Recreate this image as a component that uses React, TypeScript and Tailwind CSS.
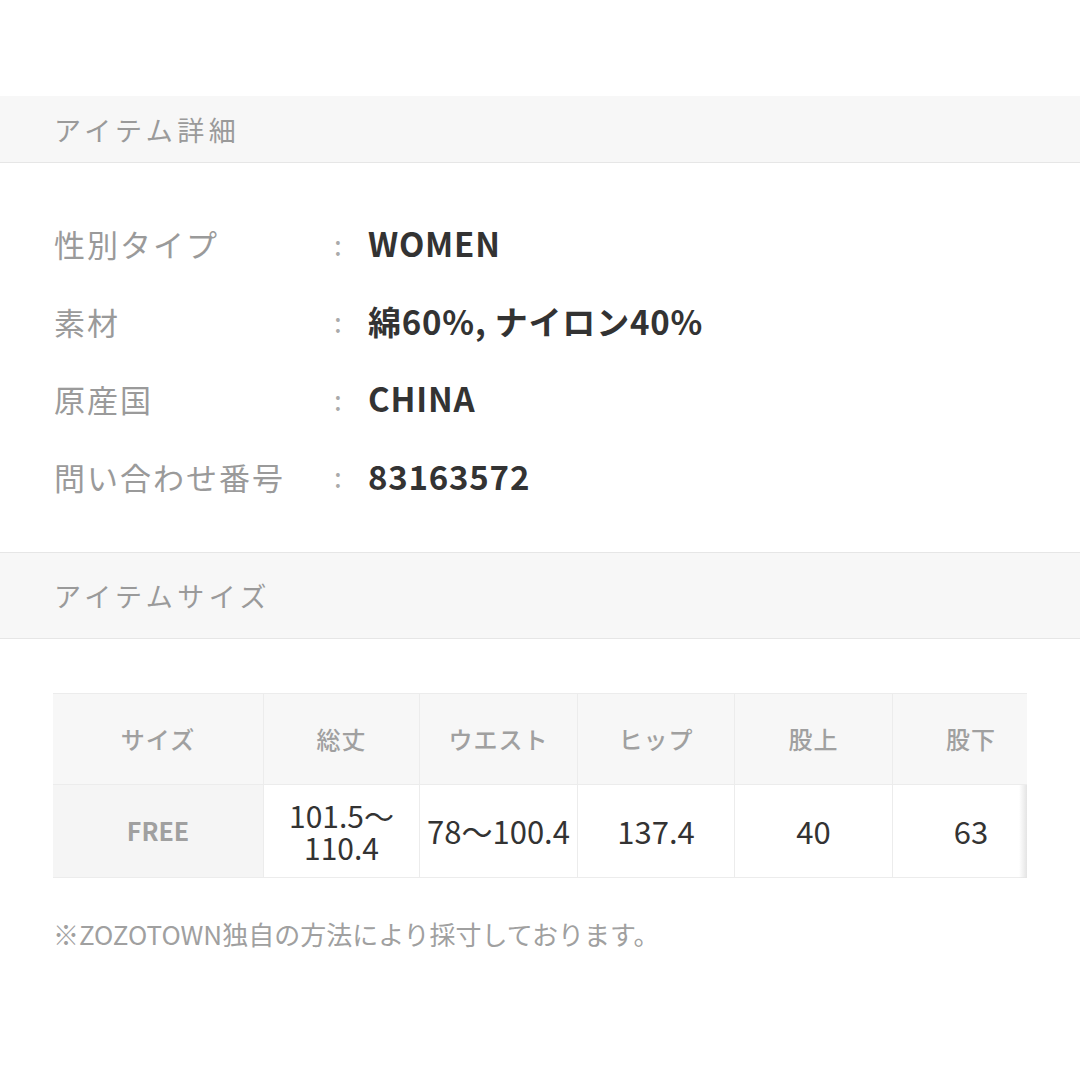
import React from "react";

const font = { fontFamily: '"Noto Sans CJK JP", "Noto Sans", sans-serif' };

const rows: [string, string][] = [
  ["性別タイプ", "WOMEN"],
  ["素材", "綿60%, ナイロン40%"],
  ["原産国", "CHINA"],
  ["問い合わせ番号", "83163572"],
];

const heads = ["総丈", "ウエスト", "ヒップ", "股上", "股下"];
const widths = ["w-[156px]", "w-[158px]", "w-[157px]", "w-[158px]", "w-[157px]"];

export default function App() {
  return (
    <div className="w-[1080px] h-[1080px] bg-white overflow-hidden" style={font}>
      <div className="h-[96px]" />
      <div className="h-[67px] bg-[#f7f7f7] border-b border-[#e6e6e6] flex items-center pl-[54px]">
        <span className="text-[27px] tracking-[4.5px] text-[#9a9a9a] leading-none">アイテム詳細</span>
      </div>
      <div className="pt-[42px] pl-[54px] flex flex-col">
        {rows.map(([k, v]) => (
          <div key={k} className="h-[77.5px] flex items-center">
            <span className="w-[280px] text-[31px] tracking-[2px] text-[#9a9a9a] leading-none">{k}</span>
            <span className="w-[34px] text-[28px] text-[#aaaaaa] leading-none">:</span>
            <span className="text-[33px] tracking-[0.8px] font-bold text-[#333333] leading-none">{v}</span>
          </div>
        ))}
      </div>
      <div className="h-[37px]" />
      <div className="h-[87px] bg-[#f7f7f7] border-y border-[#e6e6e6] flex items-center pl-[54px]">
        <span className="text-[27px] tracking-[4.5px] text-[#9a9a9a] leading-none">アイテムサイズ</span>
      </div>
      <div className="h-[54px]" />
      <div className="ml-[53px] w-[974px] overflow-hidden relative">
        <div className="flex flex-col w-[1000px]">
          <div className="flex h-[92px] bg-[#f7f7f7] border-y border-[#ececec]">
            <div className="w-[211px] flex items-center justify-center border-r border-[#ececec] text-[24px] tracking-[1px] font-medium text-[#a0a0a0]">サイズ</div>
            {heads.map((h, i) => (
              <div key={h} className={`${widths[i]} flex items-center justify-center border-r border-[#ececec] text-[24px] tracking-[1px] font-medium text-[#a0a0a0]`}>{h}</div>
            ))}
          </div>
          <div className="flex h-[93px] border-b border-[#ececec]">
            <div className="w-[211px] bg-[#f5f5f5] flex items-center justify-center border-r border-[#ececec] text-[25px] font-bold text-[#a0a0a0]">FREE</div>
            <div className="w-[156px] flex flex-col items-center justify-center border-r border-[#ececec] text-[30px] text-[#333333] leading-[32px] text-center">
              <span>101.5〜</span>
              <span>110.4</span>
            </div>
            <div className="w-[158px] flex items-center justify-center border-r border-[#ececec] text-[31px] text-[#333333]">78〜100.4</div>
            <div className="w-[157px] flex items-center justify-center border-r border-[#ececec] text-[31px] text-[#333333]">137.4</div>
            <div className="w-[158px] flex items-center justify-center border-r border-[#ececec] text-[31px] text-[#333333]">40</div>
            <div className="w-[157px] flex items-center justify-center border-r border-[#ececec] text-[31px] text-[#333333]">63</div>
          </div>
        </div>
        <div className="absolute right-0 top-[92px] h-[93px] w-[8px] bg-gradient-to-l from-[#e4e4e4] to-transparent" />
      </div>
      <div className="pl-[53px] pt-[43px] text-[26px] text-[#a0a0a0] leading-none">※ZOZOTOWN独自の方法により採寸しております。</div>
    </div>
  );
}
